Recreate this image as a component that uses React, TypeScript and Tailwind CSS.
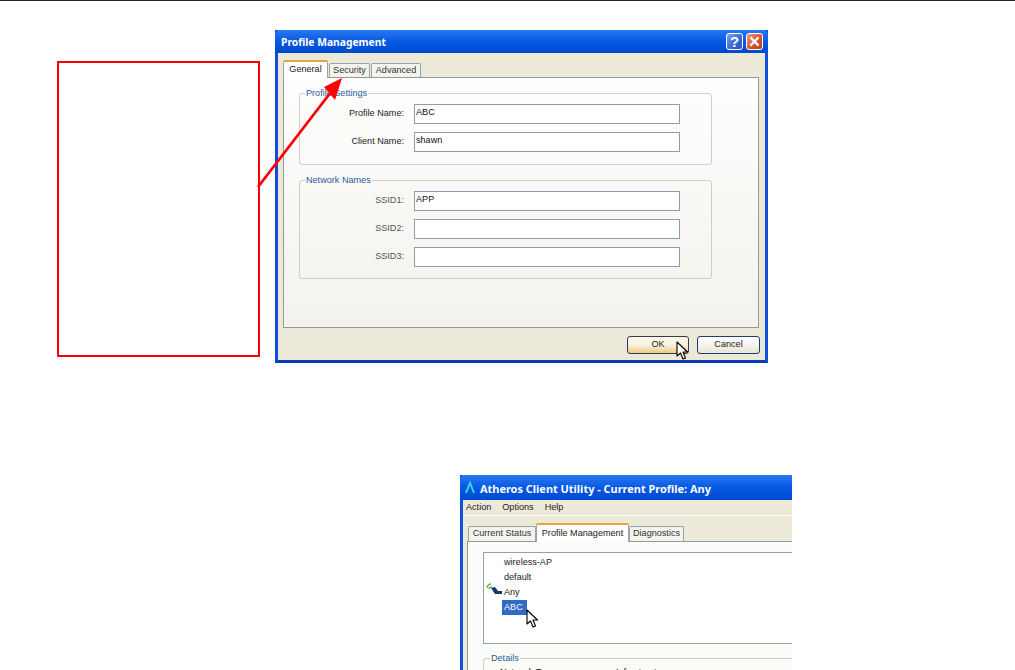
const ui = "font-['Liberation_Sans',sans-serif]"
const title = "font-['Noto_Sans',sans-serif] font-bold whitespace-nowrap text-white"

function Cursor({ className }: { className: string }) {
  return (
    <svg className={className} width="13" height="20" viewBox="0 0 13 20">
      <path d="M1 1 L1 15 L4.5 12 L7 18 L9.5 17 L7 11 L11.5 11 Z" fill="#fff" stroke="#000" strokeWidth="1.1" strokeLinejoin="round" />
    </svg>
  )
}

function TitleButton({ kind }: { kind: 'help' | 'close' }) {
  const bg =
    kind === 'help'
      ? 'bg-gradient-to-br from-[#7ea3ee] via-[#3f6fdc] to-[#2a52c0]'
      : 'bg-gradient-to-br from-[#ee9a7c] via-[#db5a33] to-[#b93a18]'
  return (
    <div className={`flex h-[17px] w-[17px] items-center justify-center rounded-[3px] border border-white ${bg}`}>
      {kind === 'help' ? (
        <span className="text-[15px] leading-none font-bold text-white">?</span>
      ) : (
        <svg width="11" height="11" viewBox="0 0 12 12">
          <path d="M1.5 1.5 L10.5 10.5 M10.5 1.5 L1.5 10.5" stroke="#fff" strokeWidth="2.4" />
        </svg>
      )}
    </div>
  )
}

function Field({ label, value, muted }: { label: string; value?: string; muted?: boolean }) {
  return (
    <div className="flex items-center">
      <span className={`w-[104px] text-right text-[9.1px] leading-none ${muted ? 'text-[#555]' : 'text-[#222]'}`}>{label}</span>
      <div className="ml-[10px] flex h-5 w-[266px] items-start border border-[#8a9eaf] bg-white px-[1px] text-[9.1px] leading-[15px] text-[#111]">
        {value}
      </div>
    </div>
  )
}

function ProfileDialog() {
  return (
    <div className={`ml-[15px] flex h-[333px] w-[493px] flex-col border-x-[3px] border-b-[3px] border-x-[#0f50dc] border-b-[#0a3bb0] bg-[#ece9d8] ${ui}`}>
      <div className="-mx-[3px] flex h-[23px] shrink-0 items-center justify-between rounded-t-[5px] bg-gradient-to-b from-[#2a78ee] via-[#0459e4] to-[#0348cf] pr-[5px] pl-[6px]">
        <span className={`pt-[3px] text-[10.3px] ${title}`}>Profile Management</span>
        <div className="flex gap-[3px]">
          <TitleButton kind="help" />
          <TitleButton kind="close" />
        </div>
      </div>

      <div className="ml-[5px] mr-[7px] mt-[7px] flex h-[17px] items-end">
        <div className="z-10 -mb-[1px] flex h-[18px] w-[45px] items-center justify-center rounded-t-[2px] border-x border-[#97a5aa] border-t-2 border-t-[#e8a63a] bg-white text-[9.1px] text-[#222]">
          General
        </div>
        <div className="ml-[1px] flex h-[14px] w-[41px] items-center justify-center rounded-t-[2px] border-x border-t border-[#97a5aa] bg-[#f5f4ec] text-[9.1px] text-[#333]">
          Security
        </div>
        <div className="ml-[1px] flex h-[14px] w-[50px] items-center justify-center rounded-t-[2px] border-x border-t border-[#97a5aa] bg-[#f5f4ec] text-[9.1px] text-[#333]">
          Advanced
        </div>
      </div>

      <div className="ml-[5px] h-[251px] w-[476px] border border-[#8f9a9e] bg-gradient-to-b from-[#fefefe] to-[#f3f2ec] pl-[15px] pt-[8px]">
        <fieldset className="h-[79px] w-[413px] rounded-[3px] border border-[#ccd0cc]">
          <legend className="ml-[5px] px-[1px] text-[9.1px] leading-[14px] text-[#2a5a9a]">Profile Settings</legend>
          <div className="mt-[4px] flex flex-col gap-2">
            <Field label="Profile Name:" value="ABC" />
            <Field label="Client Name:" value="shawn" />
          </div>
        </fieldset>
        <fieldset className="mt-[8px] h-[106px] w-[413px] rounded-[3px] border border-[#ccd0cc]">
          <legend className="ml-[5px] px-[1px] text-[9.1px] leading-[14px] text-[#2a5a9a]">Network Names</legend>
          <div className="mt-[4px] flex flex-col gap-[8px]">
            <Field label="SSID1:" value="APP" muted />
            <Field label="SSID2:" muted />
            <Field label="SSID3:" muted />
          </div>
        </fieldset>
      </div>

      <div className="relative mt-[8px] ml-[349px] flex gap-2">
        <div className="flex h-[18px] w-[62px] items-center justify-center rounded-[3px] border border-[#2c3c58] bg-gradient-to-b from-[#fff6dc] via-[#f6f2e6] to-[#f0c878] text-[9.1px] text-[#222]">
          OK
        </div>
        <div className="flex h-[18px] w-[63px] items-center justify-center rounded-[3px] border border-[#1c4068] bg-gradient-to-b from-white to-[#e8e6da] text-[9.1px] text-[#222]">
          Cancel
        </div>
        <Cursor className="absolute top-[5px] left-[49px]" />
      </div>
    </div>
  )
}

function UtilityWindow() {
  return (
    <div className={`mt-[112px] ml-[460px] w-[332px] border-l-[3px] border-l-[#0f50dc] bg-[#ece9d8] ${ui}`}>
      <div className="-ml-[3px] flex h-[25px] items-center gap-[5px] rounded-tl-[5px] bg-gradient-to-b from-[#2a78ee] via-[#0459e4] to-[#0348cf] pl-[5px]">
        <svg width="10" height="13" viewBox="0 0 10 13">
          <path d="M1 12 L5 2 L9 12" fill="none" stroke="#35d6e0" strokeWidth="2" />
        </svg>
        <span className={`pt-[3px] text-[10.95px] ${title}`}>Atheros Client Utility - Current Profile: Any</span>
      </div>
      <div className="flex h-4 items-center gap-[11px] border-b border-white pl-[3px] text-[9.1px] text-[#222]">
        <span>Action</span>
        <span>Options</span>
        <span>Help</span>
      </div>
      <div className="mt-[7px] flex h-[18px] items-end pl-[5px]">
        <div className="flex h-[15px] w-[68px] items-center justify-center rounded-t-[2px] border-x border-t border-[#97a5aa] bg-[#f5f4ec] text-[9.1px] whitespace-nowrap text-[#333]">
          Current Status
        </div>
        <div className="z-10 -mb-[1px] flex h-[19px] w-[93px] items-center justify-center rounded-t-[2px] border-x border-[#97a5aa] border-t-2 border-t-[#e8a63a] bg-white text-[9.1px] whitespace-nowrap text-[#222]">
          Profile Management
        </div>
        <div className="flex h-[15px] w-[55px] items-center justify-center rounded-t-[2px] border-x border-t border-[#97a5aa] bg-[#f5f4ec] text-[9.1px] text-[#333]">
          Diagnostics
        </div>
      </div>
      <div className="ml-[4px] h-[130px] border-t border-l border-[#8f9a9e] bg-[#fbfbf8] pt-[10px] pl-[15px]">
        <div className="relative h-[92px] border-y border-l border-[#8ea2b2] bg-white pt-[2px] pl-[18px] text-[9.1px] leading-[15px] text-[#222]">
          <div className="pl-[2px]">wireless-AP</div>
          <div className="pl-[2px]">default</div>
          <div className="relative pl-[2px]">
            <svg className="absolute top-[-2px] -left-[16px]" width="17" height="14" viewBox="0 0 17 14">
              <path d="M1 5 C1 3 3 1 5 1 M3 6 C3 5 4 4 6 4" fill="none" stroke="#5cc040" strokeWidth="1.5" />
              <path d="M5 5 L9 4 L12 8 L16 8 L16 11 L9 11 Z" fill="#123a6a" />
            </svg>
            Any
          </div>
          <div className="w-[25px] bg-[#316ac5] pl-[2px] text-white">ABC</div>
          <Cursor className="absolute top-[56px] left-[42px]" />
        </div>
        <fieldset className="mt-[7px] h-10 rounded-tl-[3px] border-t border-l border-[#ccd0cc]">
          <legend className="ml-[6px] px-[1px] text-[9.1px] leading-[14px] text-[#2a5a9a]">Details</legend>
          <div className="mt-[1px] flex pl-[16px] text-[9.1px] text-[#222]">
            <span className="w-[116px]">Network Type:</span>
            <span>Infrastructure</span>
          </div>
        </fieldset>
      </div>
    </div>
  )
}

export default function App() {
  return (
    <div className="relative h-[670px] w-[1015px] overflow-hidden border-t border-[#222] bg-white">
      <div className="flex pt-[29px] pl-[57px]">
        <div className="mt-[31px] h-[296px] w-[203px] border-2 border-[#ff0000]" />
        <ProfileDialog />
      </div>
      <UtilityWindow />

      {/* callout arrow, sits over the dialog */}
      <svg className="absolute top-[-1px] left-0" width="1015" height="670" viewBox="0 0 1015 670" fill="none">
        <path d="M258 187 L331 92" stroke="#ff0000" strokeWidth="2.8" />
        <path d="M342 78 L324 87 L335 100 Z" fill="#ff0000" />
      </svg>
    </div>
  )
}
